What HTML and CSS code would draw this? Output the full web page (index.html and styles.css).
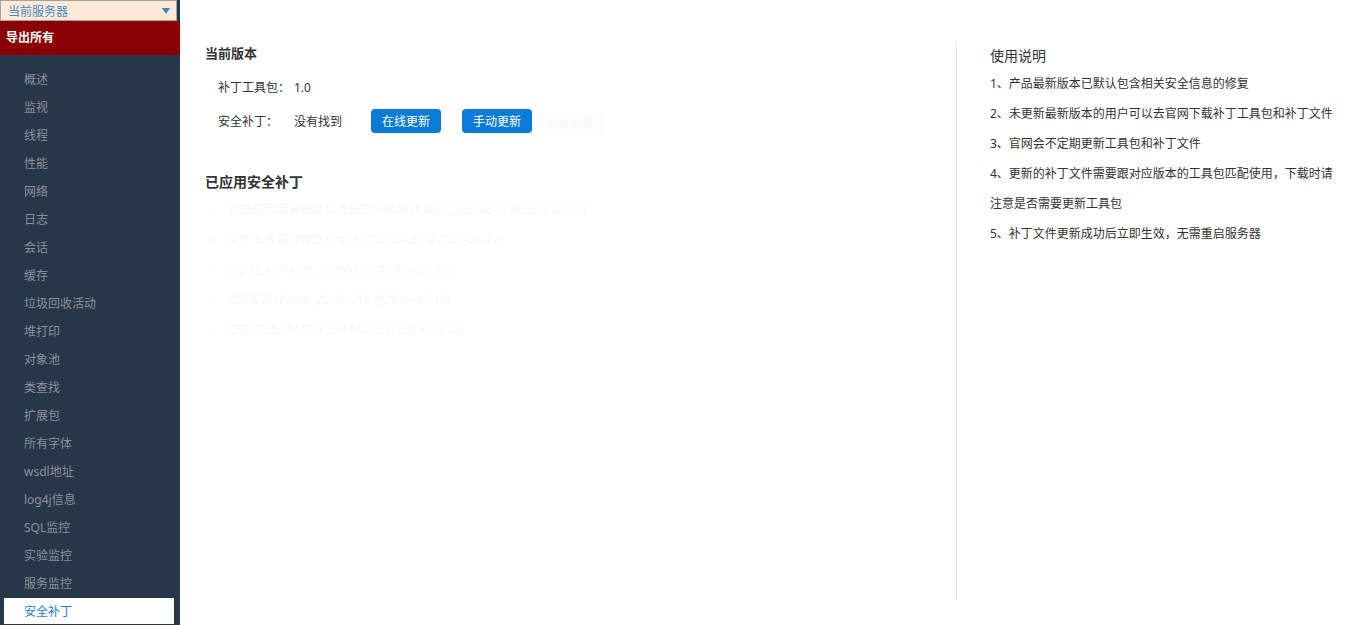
FILE: index.html
```html
<!DOCTYPE html>
<html lang="zh-CN">
<head>
    <meta charset="UTF-8">
    <title>安全补丁</title>
    <link rel="stylesheet" href="styles.css">
</head>
<body>
    <div class="sidebar">
        <div class="server-select">
            <span>当前服务器</span>
            <span class="arrow"></span>
        </div>
        <div class="export-all">导出所有</div>
        <ul class="menu">
            <li><a>概述</a></li>
            <li><a>监视</a></li>
            <li><a>线程</a></li>
            <li><a>性能</a></li>
            <li><a>网络</a></li>
            <li><a>日志</a></li>
            <li><a>会话</a></li>
            <li><a>缓存</a></li>
            <li><a>垃圾回收活动</a></li>
            <li><a>堆打印</a></li>
            <li><a>对象池</a></li>
            <li><a>类查找</a></li>
            <li><a>扩展包</a></li>
            <li><a>所有字体</a></li>
            <li><a>wsdl地址</a></li>
            <li><a>log4j信息</a></li>
            <li><a>SQL监控</a></li>
            <li><a>实验监控</a></li>
            <li><a>服务监控</a></li>
            <li class="active"><a>安全补丁</a></li>
        </ul>
    </div>

    <div class="main">
        <div class="patch-panel">
            <h3>当前版本</h3>
            <div class="row">
                <span class="label">补丁工具包：</span>
                <span class="value">1.0</span>
            </div>
            <div class="row">
                <span class="label">安全补丁：</span>
                <span class="value">没有找到</span>
                <button class="btn">在线更新</button>
                <button class="btn">手动更新</button>
                <span class="ghost">检查更新</span>
            </div>

            <h3 class="applied-title">已应用安全补丁</h3>
            <ul class="applied">
                <li>目录遍历漏洞修复以及弱口令检测 (Patch_20210610 @2021-06-10)</li>
                <li>文件上传漏洞修复 (Patch_20200427 @2020-04-27)</li>
                <li>SQL注入 (Patch_20200325 @2020-03-25)</li>
                <li>XSS攻击 (Patch_20191218 @2019-12-18)</li>
                <li>CSRF攻击 (PATCH_20191212 @2019-12-12)</li>
            </ul>
        </div>

        <div class="help">
            <h4>使用说明</h4>
            <p>1、产品最新版本已默认包含相关安全信息的修复</p>
            <p>2、未更新最新版本的用户可以去官网下载补丁工具包和补丁文件</p>
            <p>3、官网会不定期更新工具包和补丁文件</p>
            <p>4、更新的补丁文件需要跟对应版本的工具包匹配使用，下载时请注意是否需要更新工具包</p>
            <p>5、补丁文件更新成功后立即生效，无需重启服务器</p>
        </div>
    </div>
</body>
</html>
```

FILE: styles.css
```css
* {
    margin: 0;
    padding: 0;
    box-sizing: border-box;
}

body {
    display: flex;
    height: 100vh;
    background-color: #fff;
    color: #333;
    font-family: "Noto Sans", "Noto Sans CJK SC", sans-serif;
    font-size: 12px;
    overflow: hidden;
}

/* 左侧菜单 */
.sidebar {
    width: 180px;
    flex-shrink: 0;
    background-color: #283649;
}

.server-select {
    display: flex;
    justify-content: space-between;
    align-items: center;
    width: 177px;
    height: 21px;
    padding: 0 6px 0 7px;
    background-color: #fde9d7;
    border: 1px solid #a3a3a3;
    color: #4a8ac4;
    font-size: 12px;
}

.server-select .arrow {
    width: 0;
    height: 0;
    border-left: 4px solid transparent;
    border-right: 4px solid transparent;
    border-top: 6px solid #3c83c6;
}

.export-all {
    height: 34px;
    line-height: 34px;
    padding-left: 6px;
    background-color: #8b0000;
    color: #fff;
    font-weight: bold;
}

.menu {
    list-style: none;
    padding-top: 10px;
}

.menu li {
    height: 28px;
    padding: 1px 6px 1px 4px;
}

.menu li a {
    display: block;
    height: 26px;
    line-height: 27px;
    padding-left: 20px;
    color: #8a9099;
    font-size: 12px;
}

.menu li.active a {
    background-color: #fff;
    color: #1d7fd8;
}

/* 主体内容 */
.main {
    flex: 1;
    display: flex;
    padding-top: 43px;
    padding-bottom: 25px;
}

.patch-panel {
    flex: 1;
    padding-left: 25px;
}

.patch-panel h3 {
    font-size: 13px;
    line-height: 20px;
    font-weight: bold;
    color: #333;
}

.row {
    display: flex;
    align-items: center;
    height: 24px;
    padding-left: 13px;
}

.patch-panel h3 + .row {
    margin-top: 12px;
}

.row + .row {
    margin-top: 10px;
}

.row .label {
    width: 76px;
}

.row .value {
    width: 77px;
}

.btn {
    width: 70px;
    height: 24px;
    margin-right: 21px;
    border: none;
    border-radius: 4px;
    background-color: #0a7bd7;
    color: #fff;
    font-family: inherit;
    font-size: 12px;
}

.ghost {
    color: #fafafa;
    background-color: #fdfdfd;
    padding: 3px 10px;
    margin: 6px 0 0 -17px;
}

.patch-panel h3.applied-title {
    font-size: 14px;
    margin-top: 39px;
}

.applied {
    margin-top: 3px;
    padding-left: 23px;
    color: #f8f8f8;
    list-style: disc;
}

.applied li {
    line-height: 30px;
}

/* 使用说明 */
.help {
    width: 410px;
    padding-left: 33px;
    border-left: 1px solid #e6e6e6;
}

.help h4 {
    margin-top: 3px;
    font-size: 14px;
    font-weight: normal;
    line-height: 20px;
}

.help h4 + p {
    margin-top: 3px;
}

.help p {
    width: 349px;
    line-height: 30px;
}
```
